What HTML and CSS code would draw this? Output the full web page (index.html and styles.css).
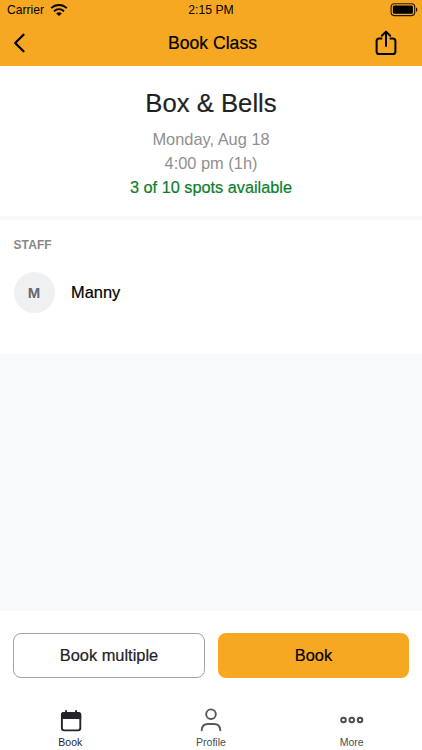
FILE: index.html
```html
<!DOCTYPE html>
<html lang="en">
<head>
<meta charset="utf-8">
<title>Book Class</title>
<link rel="stylesheet" href="styles.css">
</head>
<body>
<div class="app">
  <header class="header">
    <div class="status">
      <div class="carrier"><span>Carrier</span>
        <svg width="18" height="14" viewBox="0 0 18 14" fill="none" stroke="#000" stroke-width="1.9"><path d="M1.2 5.1C5.8.9 12.2.9 16.8 5.1M4 8.2c3-2.7 7-2.7 10 0"/><path d="M6.2 10.4c1.7-1.4 3.9-1.4 5.6 0L9 13.1z" fill="#000" stroke="none"/></svg>
      </div>
      <span class="time">2:15 PM</span>
      <svg class="battery" width="28" height="14" viewBox="0 0 28 14"><rect x="1.1" y=".8" width="23.6" height="11.8" rx="3" fill="none" stroke="#241a08" stroke-width="1.1"/><rect x="2.9" y="2.6" width="20" height="8.2" rx="1.3"/><path d="M26 4.4c1.7.6 1.7 3.8 0 4.4z"/></svg>
    </div>
    <div class="nav">
      <svg class="back" width="14" height="20" viewBox="0 0 14 20" fill="none" stroke="#000" stroke-width="2.3" stroke-linecap="round" stroke-linejoin="round"><path d="M10.5 1.8 2.2 10l8.3 8.2"/></svg>
      <h1 class="nav-title">Book Class</h1>
      <svg class="share" width="22" height="26" viewBox="0 0 22 26" fill="none" stroke="#000" stroke-width="2" stroke-linecap="round" stroke-linejoin="round"><path d="M6.5 8.4H4.2a2.6 2.6 0 0 0-2.6 2.6v10.4A2.6 2.6 0 0 0 4.2 24h13.6a2.6 2.6 0 0 0 2.6-2.6V11a2.6 2.6 0 0 0-2.6-2.6h-2.3M11 16V2M6.8 5.8 11 1.6l4.2 4.2"/></svg>
    </div>
  </header>
  <main class="content">
    <section class="summary">
      <h2 class="class-name">Box &amp; Bells</h2>
      <p class="when">Monday, Aug 18</p>
      <p class="when hour">4:00 pm (1h)</p>
      <p class="spots">3 of 10 spots available</p>
    </section>
    <section class="staff">
      <h3 class="label">STAFF</h3>
      <div class="person"><span class="avatar">M</span><span class="name">Manny</span></div>
    </section>
  </main>
  <footer class="footer">
    <div class="actions">
      <button class="btn outline"><span>Book multiple</span></button>
      <button class="btn primary"><span>Book</span></button>
    </div>
    <nav class="tabs">
      <a class="tab active">
        <svg width="24" height="24" viewBox="0 0 24 24"><rect x="3.9" y="5" width="18.4" height="17.4" rx="2.3" fill="none" stroke="#25242b" stroke-width="1.9"/><path d="M3 11V6.8a2.8 2.8 0 0 1 2.8-2.8h14.6a2.8 2.8 0 0 1 2.8 2.8V11z" fill="#25242b"/><path d="M8.1 3V5M18.1 3V5" stroke="#25242b" stroke-width="1.9" stroke-linecap="round"/></svg>
        <span>Book</span>
      </a>
      <a class="tab">
        <svg width="24" height="24" viewBox="0 0 24 24" fill="none" stroke="#55555b" stroke-width="1.9" stroke-linecap="round"><circle cx="12" cy="6.2" r="4.8"/><path d="M2.7 22.2c.2-4 2.5-6.2 6.3-6.2h6c3.8 0 6.1 2.2 6.3 6.2"/></svg>
        <span>Profile</span>
      </a>
      <a class="tab">
        <svg width="24" height="24" viewBox="0 0 24 24" fill="none" stroke="#4c4c52" stroke-width="1.9"><circle cx="3.5" cy="12" r="2.3"/><circle cx="11.8" cy="12" r="2.3"/><circle cx="20" cy="12" r="2.3"/></svg>
        <span>More</span>
      </a>
    </nav>
  </footer>
</div>
</body>
</html>
```
FILE: styles.css
```css
* { box-sizing: border-box; }
body { margin: 0; font-family: "Liberation Sans", Arial, sans-serif; color: #000; }
h1, h2, h3, p { margin: 0; font-weight: 400; }
svg { display: block; flex: none; }
.app { width: 422px; height: 750px; display: flex; flex-direction: column; background: #f7f9fb; }

.header { height: 66px; background: #f7a823; }
.status { height: 20px; display: grid; grid-template-columns: 1fr auto 1fr; padding: 0 4px 0 7px; align-items: center; }
.carrier { display: flex; align-items: center; gap: 6px; font-size: 12.1px; line-height: 20px; }
.time { font-size: 12.2px; line-height: 19px; padding-right: 3px; }
.battery { justify-self: end; }
.nav { height: 46px; display: grid; grid-template-columns: 100px 1fr 100px; padding: 0 25px 0 13px; align-items: center; }
.nav-title { font-size: 17.6px; line-height: 46px; padding-left: 15px; text-align: center; white-space: nowrap; -webkit-text-stroke: .2px; }
.share { justify-self: end; }

.content { flex: 1; }
.summary { height: 150px; background: #fff; padding-top: 19px; text-align: center; }
.class-name { font-size: 25.7px; line-height: 36px; color: #222226; -webkit-text-stroke: .2px; }
.when { font-size: 16.4px; line-height: 24px; color: #909090; margin-top: 6px; }
.hour { margin-top: 0; }
.spots { font-size: 16.3px; line-height: 25px; color: #0b7d2b; -webkit-text-stroke: .2px; }
.staff { height: 134px; background: #fff; margin-top: 4px; padding: 17px 13.5px 0; }
.label { font-size: 12px; line-height: 16px; font-weight: 700; letter-spacing: .1px; color: #88888a; }
.person { display: flex; align-items: center; gap: 16.5px; margin-top: 19.4px; }
.avatar { width: 41px; height: 41px; border-radius: 50%; background: #eff0f2; color: #68686e; font-size: 15px; font-weight: 700; line-height: 41px; text-align: center; }
.name { font-size: 16.4px; -webkit-text-stroke: .2px; }

.footer { height: 139px; background: #fff; padding: 22px 13px 0; }
.actions { display: grid; grid-template-columns: 192px 191px; gap: 13px; }
.btn { height: 45px; border: 0; border-radius: 8px; padding: 0; font: 16.4px/45px "Liberation Sans", Arial, sans-serif; color: #000; -webkit-text-stroke: .2px; }
.outline { border: 1px solid #a2a2a2; background: #fff; color: #222226; line-height: 43px; }
.primary { background: #f7a823; }
.tabs { display: grid; grid-template-columns: repeat(3, 1fr); margin: 30px -13px 0; }
.tab { display: flex; flex-direction: column; align-items: center; gap: 3px; font-size: 10.5px; line-height: 14px; color: #4b4b50; }
.active { color: #25242b; }
```
